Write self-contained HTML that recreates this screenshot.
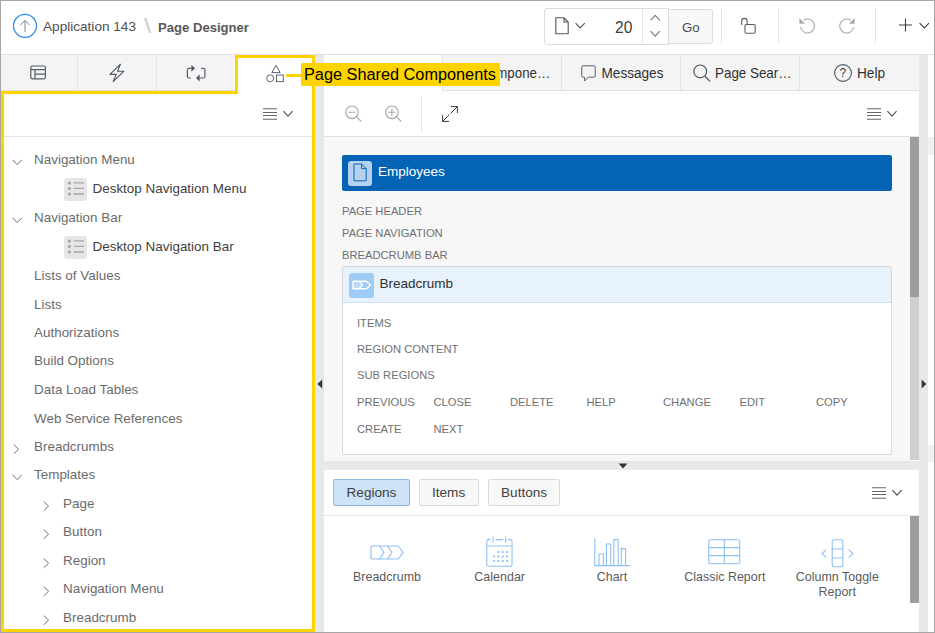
<!DOCTYPE html>
<html lang="en">
<head>
<meta charset="utf-8">
<title>Page Designer</title>
<style>
html,body{margin:0;padding:0;}
body{width:935px;height:633px;overflow:hidden;background:#fff;font-family:"Liberation Sans",Arial,sans-serif;position:relative;}
.abs,.abs *{position:absolute;}
#root{position:absolute;left:0;top:0;width:935px;height:633px;overflow:hidden;background:#fff;}
#root div,#root span,#root svg{position:absolute;}
.t{white-space:nowrap;line-height:1;}
.tree{font-size:13.45px;color:#6b6b6b;}
.tree.d{color:#404040;}
.lbl{font-size:11.2px;color:#707070;letter-spacing:0;}
.ibox{width:23px;height:23px;background:#e6e6e6;border-radius:3px;}
svg{overflow:visible;}
.gl{font-size:12.4px;color:#5a5a5a;text-align:center;width:120px;letter-spacing:0.05px;}
</style>
</head>
<body>
<div id="root">

<!-- ===== header ===== -->
<div id="hdr" style="left:1px;top:1px;width:933px;height:53px;background:#fff;"></div>
<svg style="left:12px;top:13px;" width="26" height="26" viewBox="0 0 26 26">
  <circle cx="13" cy="12.8" r="11.5" fill="none" stroke="#2d8ce6" stroke-width="1.3"/>
  <path d="M13 19.2V7.6M8.2 12.2L13 7.4L17.8 12.2" fill="none" stroke="#74849a" stroke-width="1"/>
</svg>
<span class="t" style="left:43px;top:20.3px;font-size:13.6px;color:#505050;">Application 143</span>
<span class="t" style="left:143.5px;top:15.5px;font-size:20px;color:#cdcdcd;transform:scaleX(1.3);transform-origin:0 0;">\</span>
<span class="t" style="left:158px;top:20.5px;font-size:13.1px;font-weight:700;color:#585858;">Page Designer</span>

<!-- page selector -->
<div style="left:544px;top:8px;width:125px;height:37px;border:1px solid #dcdcdc;border-radius:3px 0 0 3px;box-sizing:border-box;background:#fff;"></div>
<div style="left:668px;top:8.5px;width:45px;height:35.5px;border:1px solid #dcdcdc;border-radius:0 3px 3px 0;box-sizing:border-box;background:#f8f8f8;"></div>
<div style="left:642px;top:9px;width:1px;height:34px;background:#e6e6e6;"></div>
<svg style="left:555px;top:17px;" width="15" height="18" viewBox="0 0 15 18">
  <path d="M0.8 0.8H9L13.2 5V16.8H0.8Z M9 0.8V5H13.2" fill="none" stroke="#555" stroke-width="1.1"/>
</svg>
<svg style="left:575px;top:22px;" width="11" height="8" viewBox="0 0 11 8"><path d="M0.6 1.2L5.2 6L9.8 1.2" fill="none" stroke="#555" stroke-width="1.1"/></svg>
<span class="t" style="left:615px;top:19.5px;font-size:15.6px;color:#404040;">20</span>
<svg style="left:650px;top:14px;" width="11" height="8" viewBox="0 0 11 8"><path d="M0.6 6.4L5.2 1.4L9.8 6.4" fill="none" stroke="#777" stroke-width="1.1"/></svg>
<svg style="left:650px;top:30px;" width="11" height="8" viewBox="0 0 11 8"><path d="M0.6 1.2L5.2 6.2L9.8 1.2" fill="none" stroke="#777" stroke-width="1.1"/></svg>
<span class="t" style="left:682px;top:20.5px;font-size:13.2px;color:#4a4a4a;">Go</span>

<div style="left:721px;top:8px;width:1px;height:36px;background:#e6e6e6;"></div>
<div style="left:778px;top:8px;width:1px;height:36px;background:#e6e6e6;"></div>
<div style="left:875px;top:8px;width:1px;height:36px;background:#e6e6e6;"></div>
<!-- unlock -->
<svg style="left:739px;top:16px;" width="19" height="19" viewBox="0 0 19 19">
  <rect x="6" y="8.5" width="10.2" height="8.7" rx="1.2" fill="none" stroke="#555c66" stroke-width="1.1"/>
  <path d="M2.7 8.9V5.1A2.7 2.7 0 0 1 8.1 5.1V8.5" fill="none" stroke="#555c66" stroke-width="1.1"/>
</svg>
<!-- undo -->
<svg style="left:798px;top:17px;" width="18" height="18" viewBox="0 0 18 18">
  <path d="M5.49 3.27A7 7 0 1 1 2.57 9.97" fill="none" stroke="#a8a8a8" stroke-width="1.1"/>
  <path d="M1.4 1.1V6.7H7Z" fill="#a8a8a8"/>
</svg>
<!-- redo -->
<svg style="left:838px;top:17px;" width="18" height="18" viewBox="0 0 18 18">
  <path d="M12.71 3.27A7 7 0 1 0 15.63 9.97" fill="none" stroke="#a8a8a8" stroke-width="1.1"/>
  <path d="M16.6 1.1V6.7H11Z" fill="#a8a8a8"/>
</svg>
<!-- plus -->
<svg style="left:899px;top:18px;" width="14" height="14" viewBox="0 0 14 14"><path d="M6.5 0.5V13.5M0 7H13" fill="none" stroke="#404040" stroke-width="1.1"/></svg>
<svg style="left:919px;top:22px;" width="11" height="8" viewBox="0 0 11 8"><path d="M0.6 1.2L5.3 6L10 1.2" fill="none" stroke="#404040" stroke-width="1.1"/></svg>

<!-- ===== tab rows ===== -->
<div style="left:1px;top:54px;width:918px;height:37px;background:#f4f4f4;border-top:1px solid #e0e0e0;border-bottom:1px solid #e0e0e0;box-sizing:border-box;"></div>
<div style="left:1px;top:54px;width:933px;height:1px;background:#e0e0e0;"></div>
<!-- left tabs dividers -->
<div style="left:77px;top:55px;width:1px;height:36px;background:#e2e2e2;"></div>
<div style="left:156px;top:55px;width:1px;height:36px;background:#e2e2e2;"></div>
<!-- active left tab -->
<div style="left:238px;top:58px;width:74px;height:36px;background:#fff;"></div>
<!-- left tab icons -->
<svg style="left:30.4px;top:65.4px;" width="18" height="16" viewBox="0 0 18 16">
  <rect x="0.8" y="1" width="14.6" height="12.8" rx="1.5" fill="none" stroke="#555e6b" stroke-width="1.2"/>
  <path d="M0.8 4.6H15.4M5 4.6V13.8M5 9.2H15.4" fill="none" stroke="#555e6b" stroke-width="1.2"/>
</svg>
<svg style="left:108px;top:63px;" width="18" height="20" viewBox="0 0 18 20">
  <path d="M12.4 1.2L2 11.4H8.2L5.2 18.6L16 8.2H9.6Z" fill="none" stroke="#4d5663" stroke-width="1.1" stroke-linejoin="round"/>
</svg>
<svg style="left:186px;top:63px;" width="20" height="20" viewBox="0 0 20 20">
  <path d="M5.6 5.3H2.9Q1.4 5.3 1.4 6.8V13.5Q1.4 15 2.9 15H4.8" fill="none" stroke="#555e6b" stroke-width="1.2"/>
  <path d="M5.4 1.9L9.1 5.3L5.4 8.7Z" fill="#4d5663"/>
  <path d="M15.1 5.3H17.4Q18.9 5.3 18.9 6.8V13.5Q18.9 15 17.4 15H13.6" fill="none" stroke="#555e6b" stroke-width="1.2"/>
  <path d="M13.7 11.4L10 15L13.7 18.6Z" fill="#4d5663"/>
</svg>
<svg style="left:265px;top:63px;" width="20" height="20" viewBox="0 0 20 20">
  <path d="M11 2.2L15.2 9.6H6.8Z" fill="none" stroke="#5b6470" stroke-width="1" stroke-linejoin="round"/>
  <circle cx="5.2" cy="15.3" r="3.5" fill="none" stroke="#5b6470" stroke-width="1"/>
  <rect x="11.5" y="12" width="6.8" height="6.6" fill="none" stroke="#5b6470" stroke-width="1"/>
</svg>

<!-- center tabs -->
<div style="left:324px;top:55px;width:118px;height:36px;background:#fff;"></div>
<div style="left:442px;top:55px;width:1px;height:35px;background:#e2e2e2;"></div>
<div style="left:561px;top:55px;width:1px;height:35px;background:#e2e2e2;"></div>
<div style="left:680px;top:55px;width:1px;height:35px;background:#e2e2e2;"></div>
<div style="left:799px;top:55px;width:1px;height:35px;background:#e2e2e2;"></div>
<span class="t" style="left:479.3px;top:67px;font-size:13.3px;color:#303030;transform:scaleY(1.1);transform-origin:0 11.5px;">Compone…</span>
<svg style="left:580px;top:64px;" width="17" height="19" viewBox="0 0 17 19">
  <path d="M3.2 1.8H13.8Q15.2 1.8 15.2 3.2V11.8Q15.2 13.2 13.8 13.2H8.2L4.6 17V13.2H3.2Q1.8 13.2 1.8 11.8V3.2Q1.8 1.8 3.2 1.8Z" fill="none" stroke="#555e6b" stroke-width="1" stroke-linejoin="round"/>
</svg>
<span class="t" style="left:601.5px;top:67px;font-size:13.6px;color:#303030;transform:scaleY(1.1);transform-origin:0 11.5px;">Messages</span>
<svg style="left:692px;top:63px;" width="20" height="20" viewBox="0 0 20 20">
  <circle cx="8.2" cy="8.4" r="6.4" fill="none" stroke="#4d5663" stroke-width="1.2"/>
  <path d="M12.8 13L18 18.4" fill="none" stroke="#4d5663" stroke-width="1.2"/>
</svg>
<span class="t" style="left:715px;top:67px;font-size:13.4px;color:#303030;transform:scaleY(1.1);transform-origin:0 11.5px;">Page Sear…</span>
<svg style="left:833px;top:63px;" width="20" height="20" viewBox="0 0 20 20">
  <circle cx="10" cy="10" r="8.4" fill="none" stroke="#4d5663" stroke-width="1.1"/>
</svg>
<span class="t" style="left:839.5px;top:67px;font-size:12px;color:#404040;">?</span>
<span class="t" style="left:857px;top:67px;font-size:13.6px;color:#303030;transform:scaleY(1.1);transform-origin:0 11.5px;">Help</span>

<!-- ===== left pane ===== -->
<div style="left:4px;top:94px;width:308px;height:42px;background:#fff;border-bottom:1px solid #e2e2e2;"></div>
<svg style="left:263px;top:107px;" width="32" height="14" viewBox="0 0 32 14">
  <path d="M0 1.8H14M0 5.5H14M0 8.5H14M0 12.2H14" fill="none" stroke="#666" stroke-width="1.1"/>
  <path d="M20.4 4.2L25 9.2L29.6 4.2" fill="none" stroke="#555" stroke-width="1.2"/>
</svg>

<div id="tree">
<svg style="left:12px;top:158.6px;" width="11" height="7" viewBox="0 0 11 7"><path d="M0.6 0.8L5.2 5.6L9.8 0.8" fill="none" stroke="#6e6e6e" stroke-width="1"/></svg>
<span class="t tree" style="left:34px;top:152.9px;">Navigation Menu</span>
<div class="ibox" style="left:64px;top:178.0px;"></div>
<svg style="left:64px;top:178.0px;" width="23" height="23" viewBox="0 0 23 23"><circle cx="5.4" cy="4.9" r="1.5" fill="#a0a0a0"/><circle cx="5.4" cy="10.4" r="1.5" fill="#a0a0a0"/><circle cx="5.4" cy="16" r="1.5" fill="#a0a0a0"/><path d="M9.8 4.9H20M9.8 10.4H20M9.8 16H20" stroke="#a6a6a6" stroke-width="1.3" fill="none"/></svg>
<span class="t tree d" style="left:92.5px;top:182.2px;">Desktop Navigation Menu</span>
<svg style="left:12px;top:216.6px;" width="11" height="7" viewBox="0 0 11 7"><path d="M0.6 0.8L5.2 5.6L9.8 0.8" fill="none" stroke="#6e6e6e" stroke-width="1"/></svg>
<span class="t tree" style="left:34px;top:210.9px;">Navigation Bar</span>
<div class="ibox" style="left:64px;top:236.0px;"></div>
<svg style="left:64px;top:236.0px;" width="23" height="23" viewBox="0 0 23 23"><circle cx="5.4" cy="4.9" r="1.5" fill="#a0a0a0"/><circle cx="5.4" cy="10.4" r="1.5" fill="#a0a0a0"/><circle cx="5.4" cy="16" r="1.5" fill="#a0a0a0"/><path d="M9.8 4.9H20M9.8 10.4H20M9.8 16H20" stroke="#a6a6a6" stroke-width="1.3" fill="none"/></svg>
<span class="t tree d" style="left:92.5px;top:240.2px;">Desktop Navigation Bar</span>
<span class="t tree" style="left:34px;top:268.9px;">Lists of Values</span>
<span class="t tree" style="left:34px;top:297.6px;">Lists</span>
<span class="t tree" style="left:34px;top:326.0px;">Authorizations</span>
<span class="t tree" style="left:34px;top:354.4px;">Build Options</span>
<span class="t tree" style="left:34px;top:383.0px;">Data Load Tables</span>
<span class="t tree" style="left:34px;top:411.5px;">Web Service References</span>
<svg style="left:13.4px;top:443.9px;" width="7" height="11" viewBox="0 0 7 11"><path d="M0.8 0.6L5.6 5.2L0.8 9.8" fill="none" stroke="#6e6e6e" stroke-width="1"/></svg>
<span class="t tree" style="left:34px;top:439.8px;">Breadcrumbs</span>
<svg style="left:12px;top:474.1px;" width="11" height="7" viewBox="0 0 11 7"><path d="M0.6 0.8L5.2 5.6L9.8 0.8" fill="none" stroke="#6e6e6e" stroke-width="1"/></svg>
<span class="t tree" style="left:34px;top:468.4px;">Templates</span>
<svg style="left:43.0px;top:500.8px;" width="7" height="11" viewBox="0 0 7 11"><path d="M0.8 0.6L5.6 5.2L0.8 9.8" fill="none" stroke="#6e6e6e" stroke-width="1"/></svg>
<span class="t tree" style="left:63px;top:496.7px;">Page</span>
<svg style="left:43.0px;top:529.4px;" width="7" height="11" viewBox="0 0 7 11"><path d="M0.8 0.6L5.6 5.2L0.8 9.8" fill="none" stroke="#6e6e6e" stroke-width="1"/></svg>
<span class="t tree" style="left:63px;top:525.3px;">Button</span>
<svg style="left:43.0px;top:557.8px;" width="7" height="11" viewBox="0 0 7 11"><path d="M0.8 0.6L5.6 5.2L0.8 9.8" fill="none" stroke="#6e6e6e" stroke-width="1"/></svg>
<span class="t tree" style="left:63px;top:553.7px;">Region</span>
<svg style="left:43.0px;top:586.4px;" width="7" height="11" viewBox="0 0 7 11"><path d="M0.8 0.6L5.6 5.2L0.8 9.8" fill="none" stroke="#6e6e6e" stroke-width="1"/></svg>
<span class="t tree" style="left:63px;top:582.3px;">Navigation Menu</span>
<svg style="left:43.0px;top:614.7px;" width="7" height="11" viewBox="0 0 7 11"><path d="M0.8 0.6L5.6 5.2L0.8 9.8" fill="none" stroke="#6e6e6e" stroke-width="1"/></svg>
<span class="t tree" style="left:63px;top:610.6px;">Breadcrumb</span>
</div><!--/tree-->

<!-- ===== splitters ===== -->
<div style="left:315px;top:55px;width:9px;height:577px;background:#e8e8e8;"></div>
<svg style="left:317px;top:379px;" width="6" height="10" viewBox="0 0 6 10"><path d="M5.2 0.6V9.4L0.4 5Z" fill="#333"/></svg>
<div style="left:919px;top:55px;width:9px;height:577px;background:#e8e8e8;"></div>
<svg style="left:921px;top:379px;" width="6" height="10" viewBox="0 0 6 10"><path d="M0.6 0.6V9.4L5.4 5Z" fill="#333"/></svg>
<div style="left:928px;top:55px;width:6px;height:577px;background:#fff;"></div>
<div style="left:928px;top:137px;width:6px;height:18px;background:#f0f0f0;"></div>
<div style="left:928px;top:445px;width:6px;height:17px;background:#f0f0f0;"></div>

<div id="center">
<div style="left:324px;top:91px;width:595px;height:45px;background:#fff;"></div>
<div style="left:324px;top:136px;width:595px;height:1px;background:#e2e2e2;"></div>
<svg style="left:344px;top:105px;" width="19" height="19" viewBox="0 0 19 19"><circle cx="8" cy="7.3" r="6.3" fill="none" stroke="#a6a6a6" stroke-width="1.1"/><path d="M4.4 7.3H11.6M12.6 11.9L17.4 16.7" fill="none" stroke="#a6a6a6" stroke-width="1.1"/></svg>
<svg style="left:383.5px;top:105px;" width="19" height="19" viewBox="0 0 19 19"><circle cx="7.9" cy="7.3" r="6.3" fill="none" stroke="#a6a6a6" stroke-width="1.1"/><path d="M4.3 7.3H11.5M7.9 3.7V10.9M12.5 11.9L17.3 16.7" fill="none" stroke="#a6a6a6" stroke-width="1.1"/></svg>
<div style="left:421px;top:96px;width:1px;height:36px;background:#e2e2e2;"></div>
<svg style="left:442px;top:106px;" width="16" height="16" viewBox="0 0 16 16"><path d="M9 0.6H15.4V7M15.4 0.6L8.6 7.4M0.6 9V15.4H7M0.6 15.4L7.4 8.6" fill="none" stroke="#3a3a3a" stroke-width="1"/></svg>
<svg style="left:867px;top:107px;" width="32" height="14" viewBox="0 0 32 14"><path d="M0 1.8H14M0 5.5H14M0 8.5H14M0 12.2H14" fill="none" stroke="#666" stroke-width="1.1"/><path d="M20.4 4.2L25 9.2L29.6 4.2" fill="none" stroke="#555" stroke-width="1.2"/></svg>
<div style="left:324px;top:137px;width:586px;height:324px;background:#f7f7f7;"></div>
<div style="left:910px;top:137px;width:9px;height:323px;background:#cfcfcf;"></div>
<div style="left:910px;top:137px;width:9px;height:160px;background:#9e9e9e;"></div>
<div style="left:342px;top:155px;width:550px;height:36px;background:#0563b5;border-radius:2px;"></div>
<div style="left:348px;top:161px;width:24px;height:25px;background:#b4d2ee;border-radius:3px;"></div>
<svg style="left:353px;top:163.4px;" width="15" height="19" viewBox="0 0 15 19"><path d="M1 1H8.6L13.2 5.6V17.8H1Z M8.6 1V5.6H13.2" fill="none" stroke="#0563b5" stroke-width="1"/></svg>
<span class="t" style="left:378px;top:165px;font-size:13.5px;color:#fff;">Employees</span>
<span class="t lbl" style="left:342px;top:205.6px;">PAGE HEADER</span>
<span class="t lbl" style="left:342px;top:227.6px;">PAGE NAVIGATION</span>
<span class="t lbl" style="left:342px;top:249.8px;">BREADCRUMB BAR</span>
<div style="left:342px;top:266px;width:550px;height:189px;background:#fff;border:1px solid #d4d8dc;box-sizing:border-box;border-radius:2px;"></div>
<div style="left:343px;top:267px;width:548px;height:35px;background:#e7f2fc;border-bottom:1px solid #cfe0f0;"></div>
<div style="left:349px;top:273px;width:25px;height:24.5px;background:#9dccf5;border-radius:3px;"></div>
<svg style="left:351.5px;top:280px;" width="20" height="10" viewBox="0 0 20 10"><path d="M1.6 1.2H7.4L10.4 5L7.4 8.8H1.6Q1 8.8 1 8.2V1.8Q1 1.2 1.6 1.2Z" fill="rgba(255,255,255,0.3)" stroke="none"/><path d="M1.6 1.2H14.4L18.4 5L14.4 8.8H1.6Q1 8.8 1 8.2V1.8Q1 1.2 1.6 1.2Z M7.4 1.2L10.4 5L7.4 8.8" fill="none" stroke="#fff" stroke-width="1.4" stroke-linejoin="round"/></svg>
<span class="t" style="left:379.6px;top:276.8px;font-size:13.5px;color:#303030;">Breadcrumb</span>
<span class="t lbl" style="left:357px;top:317.6px;">ITEMS</span>
<span class="t lbl" style="left:357px;top:343.7px;">REGION CONTENT</span>
<span class="t lbl" style="left:357px;top:370.1px;">SUB REGIONS</span>
<span class="t lbl" style="left:357.0px;top:396.5px;">PREVIOUS</span>
<span class="t lbl" style="left:433.5px;top:396.5px;">CLOSE</span>
<span class="t lbl" style="left:510.0px;top:396.5px;">DELETE</span>
<span class="t lbl" style="left:586.5px;top:396.5px;">HELP</span>
<span class="t lbl" style="left:663.0px;top:396.5px;">CHANGE</span>
<span class="t lbl" style="left:739.5px;top:396.5px;">EDIT</span>
<span class="t lbl" style="left:816.0px;top:396.5px;">COPY</span>
<span class="t lbl" style="left:357.0px;top:423.6px;">CREATE</span>
<span class="t lbl" style="left:433.5px;top:423.6px;">NEXT</span>
<div style="left:324px;top:461px;width:595px;height:9px;background:#e8e8e8;"></div>
<svg style="left:617.6px;top:462.7px;" width="10" height="6" viewBox="0 0 10 6"><path d="M0.6 0.6H9.4L5 5.4Z" fill="#333"/></svg>
<div style="left:324px;top:470px;width:595px;height:162px;background:#fff;"></div>
<div style="left:333px;top:479px;width:77px;height:27px;background:#cde3f8;border:1px solid #8fb8e0;box-sizing:border-box;border-radius:2px;"></div>
<span class="t" style="left:346.5px;top:485.5px;font-size:13.6px;color:#404040;">Regions</span>
<div style="left:419px;top:479px;width:60px;height:27px;background:#f8f8f8;border:1px solid #dadada;box-sizing:border-box;border-radius:2px;"></div>
<span class="t" style="left:432px;top:485.5px;font-size:13.6px;color:#404040;">Items</span>
<div style="left:488px;top:479px;width:72px;height:27px;background:#f8f8f8;border:1px solid #dadada;box-sizing:border-box;border-radius:2px;"></div>
<span class="t" style="left:501px;top:485.5px;font-size:13.6px;color:#404040;">Buttons</span>
<svg style="left:872px;top:486px;" width="32" height="14" viewBox="0 0 32 14"><path d="M0 1.8H14M0 5.5H14M0 8.5H14M0 12.2H14" fill="none" stroke="#666" stroke-width="1.1"/><path d="M20.4 4.2L25 9.2L29.6 4.2" fill="none" stroke="#555" stroke-width="1.2"/></svg>
<div style="left:324px;top:515px;width:595px;height:1px;background:#e6e6e6;"></div>
<div style="left:910px;top:516px;width:9px;height:87px;background:#9e9e9e;"></div>
<svg style="left:370px;top:544.8px;" width="34" height="15" viewBox="0 0 34 15"><path d="M2.4 1H9.6L14 7.5L9.6 14H2.4Q1 14 1 12.6V2.4Q1 1 2.4 1Z M9.6 1H17.6L22 7.5L17.6 14H9.6 M17.6 1H28.4L33 7.5L28.4 14H17.6" fill="none" stroke="#8fc0f2" stroke-width="1.2" stroke-linejoin="round"/></svg>
<svg style="left:485.7px;top:536px;" width="26.8" height="31" viewBox="0 0 28 31" preserveAspectRatio="none"><path d="M5 3.6H2.6Q0.8 3.6 0.8 5.4V28.4Q0.8 30.2 2.6 30.2H25.4Q27.2 30.2 27.2 28.4V5.4Q27.2 3.6 25.4 3.6H23 M10 3.6H18 M7.4 0.6V6.6 M20.6 0.6V6.6 M0.8 10H27.2" fill="none" stroke="#8fc0f2" stroke-width="1.1"/><rect x="12" y="15" width="2" height="2" fill="#8fc0f2"/><rect x="16.5" y="15" width="2" height="2" fill="#8fc0f2"/><rect x="21" y="15" width="2" height="2" fill="#8fc0f2"/><rect x="7.5" y="19.5" width="2" height="2" fill="#8fc0f2"/><rect x="12" y="19.5" width="2" height="2" fill="#8fc0f2"/><rect x="16.5" y="19.5" width="2" height="2" fill="#8fc0f2"/><rect x="21" y="19.5" width="2" height="2" fill="#8fc0f2"/><rect x="7.5" y="24" width="2" height="2" fill="#8fc0f2"/><rect x="12" y="24" width="2" height="2" fill="#8fc0f2"/><rect x="16.5" y="24" width="2" height="2" fill="#8fc0f2"/><rect x="21" y="24" width="2" height="2" fill="#8fc0f2"/></svg>
<svg style="left:594px;top:537px;" width="36" height="30" viewBox="0 0 36 30"><path d="M0.8 1.6V28.6H36 M5 28.6V17H9.4V28.6 M12.4 28.6V7H16.8V28.6 M19.8 28.6V2.6H24.2V28.6 M27.2 28.6V11.6H31.6V28.6" fill="none" stroke="#8fc0f2" stroke-width="1.1"/></svg>
<svg style="left:707.8px;top:539px;" width="34" height="26" viewBox="0 0 34 26"><rect x="0.8" y="0.8" width="31" height="24" rx="1.5" fill="none" stroke="#8fc0f2" stroke-width="1.1"/><path d="M0.8 8.6H31.8M0.8 16.6H31.8M16.3 0.8V24.8" fill="none" stroke="#8fc0f2" stroke-width="1.1"/></svg>
<svg style="left:820.8px;top:538.8px;" width="33" height="29" viewBox="0 0 33 29"><rect x="11.2" y="0.8" width="10.6" height="27" rx="2" fill="none" stroke="#8fc0f2" stroke-width="1.1"/><path d="M11.2 10H21.8M11.2 19H21.8 M5.4 10.6L1 14.6L5.4 18.6 M27.6 10.6L32 14.6L27.6 18.6" fill="none" stroke="#8fc0f2" stroke-width="1.1"/></svg>
<span class="gl" style="left:327px;top:570px;line-height:15.2px;">Breadcrumb</span>
<span class="gl" style="left:439.7px;top:570px;line-height:15.2px;">Calendar</span>
<span class="gl" style="left:552px;top:570px;line-height:15.2px;">Chart</span>
<span class="gl" style="left:664.8px;top:570px;line-height:15.2px;">Classic Report</span>
<span class="gl" style="left:777.3px;top:570px;line-height:15.2px;">Column Toggle<br>Report</span>
</div><!--/center-->

<!-- ===== yellow highlight ===== -->
<div style="left:1px;top:91px;width:237px;height:3px;background:#fdd400;"></div>
<div style="left:1px;top:91px;width:3px;height:541px;background:#fdd400;"></div>
<div style="left:1px;top:629px;width:314px;height:3px;background:#fdd400;"></div>
<div style="left:312px;top:55px;width:3px;height:577px;background:#fdd400;"></div>
<div style="left:235px;top:55px;width:80px;height:3px;background:#fdd400;"></div>
<div style="left:235px;top:55px;width:3px;height:39px;background:#fdd400;"></div>
<div style="left:286px;top:74px;width:16px;height:3px;background:#fdd400;"></div>
<div style="left:301px;top:63px;width:199px;height:23px;background:#fdd400;"></div>
<span class="t" style="left:304px;top:66px;font-size:16.3px;color:#000;">Page Shared Components</span>

<!-- ===== outer border ===== -->
<div style="left:0;top:0;width:935px;height:1px;background:#a6a6a6;"></div>
<div style="left:0;top:0;width:1px;height:633px;background:#a6a6a6;"></div>
<div style="left:934px;top:0;width:1px;height:633px;background:#a6a6a6;"></div>
<div style="left:0;top:632px;width:935px;height:1px;background:#a6a6a6;"></div>
</div>
</body>
</html>
